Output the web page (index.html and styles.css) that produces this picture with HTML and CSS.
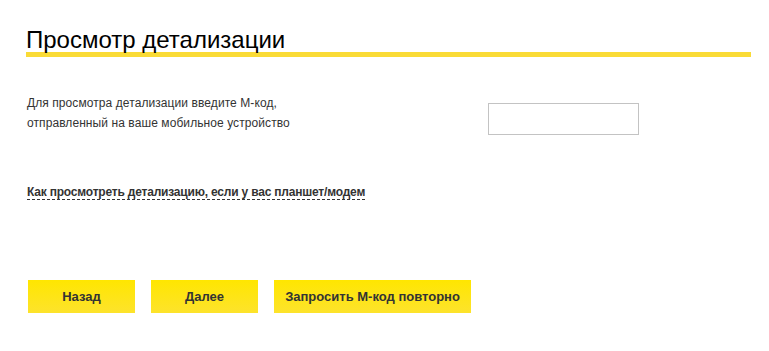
FILE: index.html
```html
<!DOCTYPE html>
<html lang="ru">
<head>
<meta charset="utf-8">
<title>Просмотр детализации</title>
<link rel="stylesheet" href="styles.css">
</head>
<body>
<div class="page">
  <h1 class="title">Просмотр детализации</h1>
  <div class="code-row">
    <p class="hint">Для просмотра детализации введите М-код,<br>отправленный на ваше мобильное устройство</p>
    <input class="code-input" type="text">
  </div>
  <div class="help">
    <a class="help-link" href="#">Как просмотреть детализацию, если у вас планшет/модем</a>
  </div>
  <div class="actions">
    <button class="btn btn-small" type="button">Назад</button>
    <button class="btn btn-small" type="button">Далее</button>
    <button class="btn btn-wide" type="button">Запросить М-код повторно</button>
  </div>
</div>
</body>
</html>
```

FILE: styles.css
```css
html, body {
  margin: 0;
  padding: 0;
  background: #fff;
}

body {
  font-family: Arial, "Liberation Sans", sans-serif;
  color: #333;
}

.page {
  width: 725px;
  padding-left: 26px;
}

.title {
  margin: 27px 0 0;
  font-size: 24px;
  line-height: 25px;
  font-weight: normal;
  color: #000;
  border-bottom: 5px solid #fadb36;
}

.code-row {
  display: flex;
  align-items: flex-start;
  margin-top: 36px;
}

.hint {
  width: 462px;
  margin: 0 0 0 1px;
  font-size: 12px;
  line-height: 20px;
  letter-spacing: 0.08px;
  color: #333;
}

.code-input {
  box-sizing: border-box;
  width: 151px;
  height: 32px;
  margin: 10px 0 0 -1px;
  border: 1px solid #c3c3c3;
  padding: 0 6px;
  background: #fff;
  font-family: inherit;
  font-size: 13px;
}

.help {
  margin-top: 47px;
  padding-left: 1px;
}

.help-link {
  font-size: 12px;
  line-height: 16px;
  font-weight: bold;
  letter-spacing: -0.2px;
  color: #333;
  text-decoration: none;
  border-bottom: 1px dashed #333;
}

.actions {
  display: flex;
  gap: 16px;
  margin-top: 80px;
  padding-left: 2px;
}

.btn {
  height: 33px;
  border: 0;
  padding: 0;
  background: linear-gradient(#ffe600, #fde32c);
  font-family: inherit;
  font-size: 13px;
  font-weight: bold;
  color: #333;
  cursor: pointer;
}

.btn-small {
  width: 107px;
}

.btn-wide {
  width: 197px;
}
```
